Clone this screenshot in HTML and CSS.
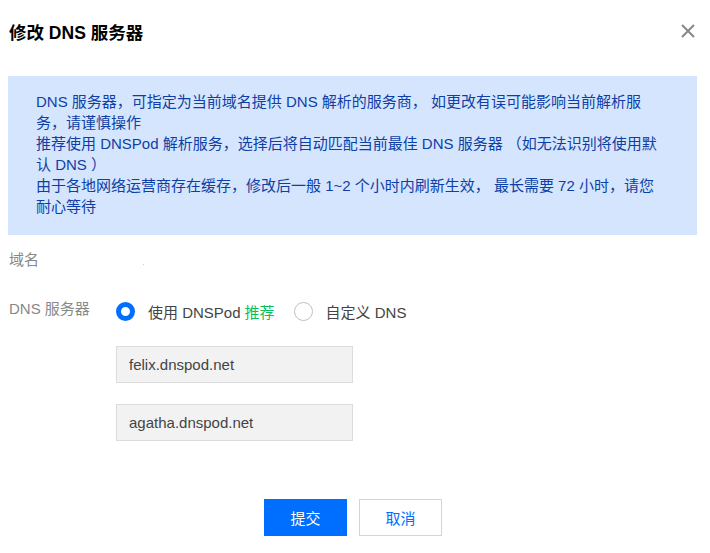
FILE: index.html
```html
<!DOCTYPE html>
<html lang="zh">
<head>
<meta charset="utf-8">
<link rel="stylesheet" href="styles.css">
</head>
<body>
<div class="dialog">
  <div class="header">
    <h1 class="title">修改 DNS 服务器</h1>
    <svg class="close" width="16" height="16" viewBox="0 0 16 16"><path d="M2 2L14 14M14 2L2 14" stroke="#888" stroke-width="2" fill="none"/></svg>
  </div>
  <div class="notice">
    <p>DNS 服务器，可指定为当前域名提供 DNS 解析的服务商， 如更改有误可能影响当前解析服务，请谨慎操作</p>
    <p>推荐使用 DNSPod 解析服务，选择后将自动匹配当前最佳 DNS 服务器 （如无法识别将使用默认 DNS ）</p>
    <p>由于各地网络运营商存在缓存，修改后一般 1~2 个小时内刷新生效， 最长需要 72 小时，请您耐心等待</p>
  </div>
  <div class="form">
    <div class="row row-domain">
      <div class="label">域名</div>
      <div class="value"><span class="dot"></span></div>
    </div>
    <div class="row row-dns">
      <div class="label">DNS 服务器</div>
      <div class="value">
        <div class="radios">
          <label class="radio"><span class="circle checked"></span>使用 DNSPod <span class="rec">推荐</span></label>
          <label class="radio"><span class="circle"></span>自定义 DNS</label>
        </div>
        <div class="input">felix.dnspod.net</div>
        <div class="input">agatha.dnspod.net</div>
      </div>
    </div>
  </div>
  <div class="footer">
    <button class="btn primary">提交</button>
    <button class="btn">取消</button>
  </div>
</div>
</body>
</html>
```
FILE: styles.css
```css
* { box-sizing: border-box; }
html, body { margin: 0; padding: 0; background: #fff; }
body {
  font-family: "Liberation Sans", Arial, "Noto Sans CJK SC", sans-serif;
  font-size: 15px;
  color: #444;
}
.dialog { width: 710px; height: 553px; padding: 0 13px 0 8px; }
.header {
  display: flex; justify-content: space-between; align-items: center;
  height: 62px; padding-left: 1px; padding-right: 0;
}
.title { margin: 0; font-size: 17.5px; font-weight: bold; color: #000; }
.close { margin-right: 1px; }
.notice {
  margin-top: 14px;
  background: #d5e5fd;
  padding: 15px 40px 18px 28px;
  color: #0d3fa6;
  line-height: 21px;
  font-size: 15px;
}
.notice p { margin: 0; }
.form { margin-top: 14px; }
.row { display: flex; }
.label { width: 108px; color: #888; line-height: 22px; padding-left: 1px; }
.row-domain { height: 38px; }
.dot { display: inline-block; width: 1px; height: 1px; background: #ccc; margin: 15px 0 0 27px; }
.row-dns { margin-top: 11px; }
.value { display: flex; flex-direction: column; }
.radios { display: flex; gap: 19px; height: 24px; align-items: center; margin-top: 1px; }
.radio { display: flex; align-items: center; color: #444; }
.circle {
  width: 19px; height: 19px; border-radius: 50%;
  border: 1px solid #c0c0c0; margin-right: 13px; background: #fff;
}
.circle.checked { border: 5px solid #006eff; }
.rec { color: #0abf5b; margin-left: 4px; }
.input {
  width: 237px; height: 37px; margin-top: 11px;
  background: #f2f2f2; border: 1px solid #dcdcdc;
  padding-left: 12px; line-height: 35px; color: #444;
}
.radios + .input { margin-top: 23px; }
.input + .input { margin-top: 21px; }
.footer { display: flex; justify-content: center; gap: 12px; margin-top: 58px; padding-left: 1px; }
.btn {
  width: 83px; height: 37px; font-size: 15px; font-family: inherit;
  border: 1px solid #cfd5de; background: #fff; color: #006eff; padding: 0;
}
.btn.primary { background: #006eff; border-color: #006eff; color: #fff; }
```
